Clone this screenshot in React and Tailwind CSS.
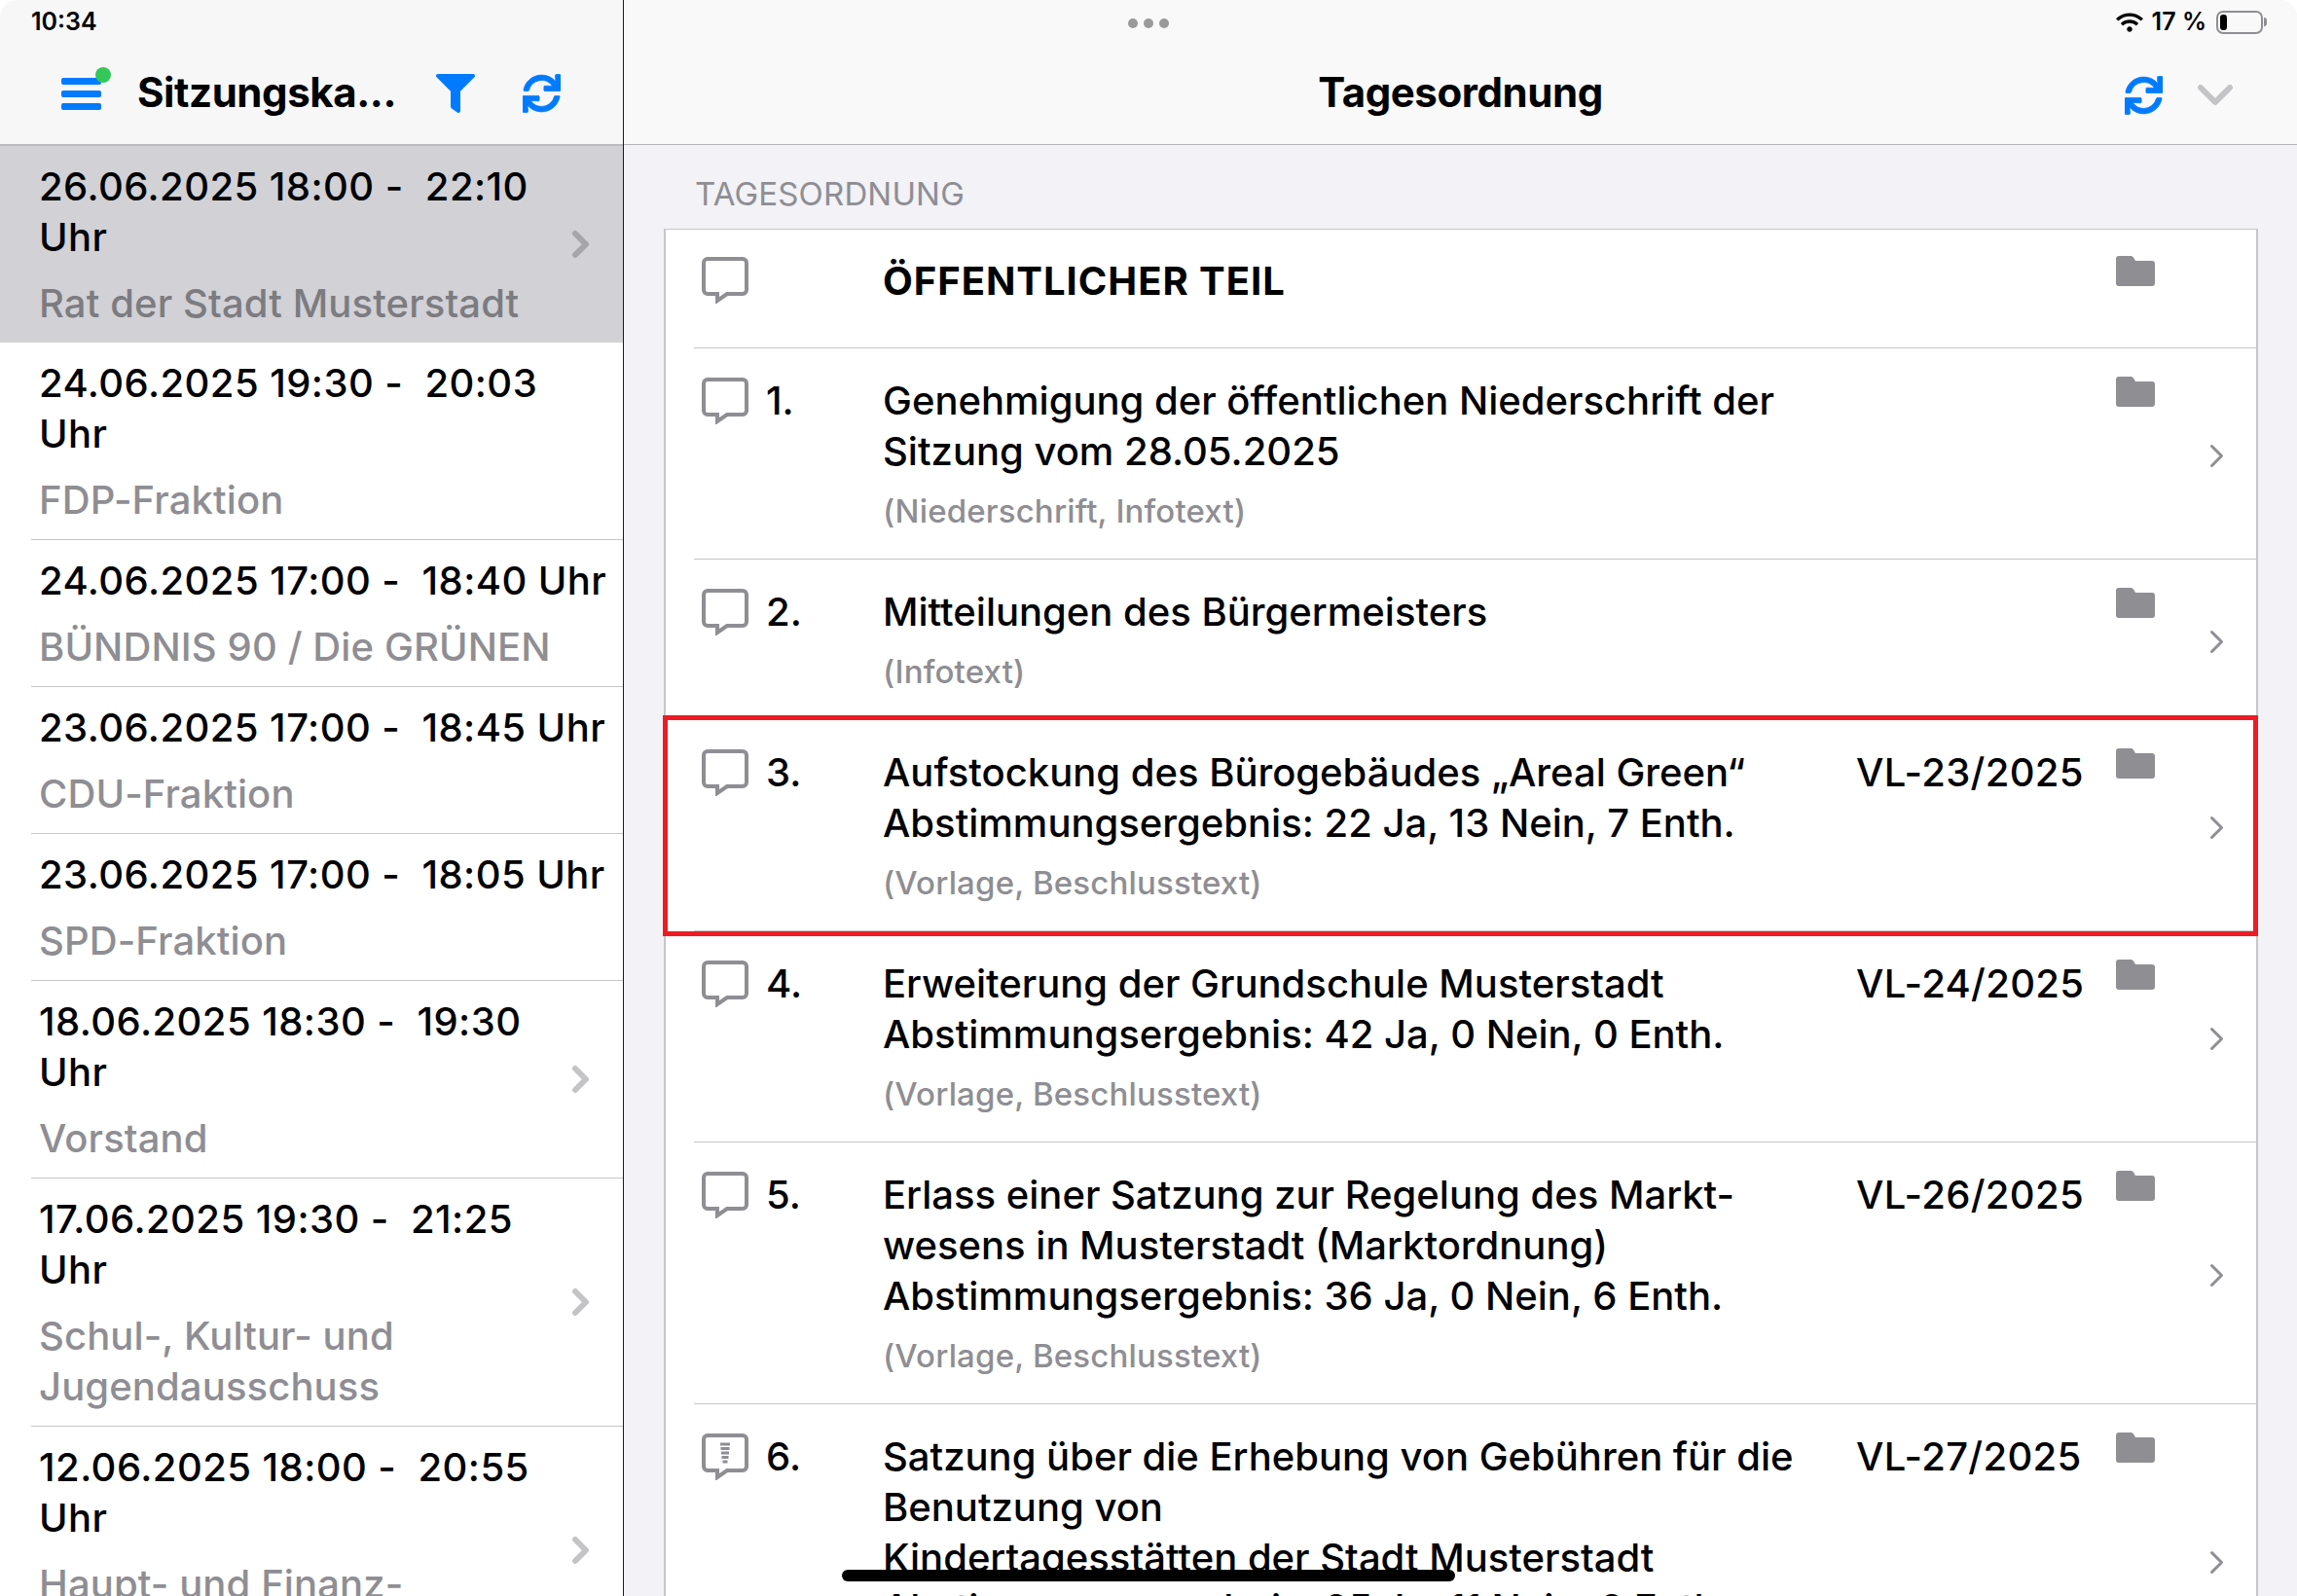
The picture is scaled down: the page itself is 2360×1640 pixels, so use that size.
import { FaFilter, FaSync, FaWifi } from 'react-icons/fa';

const meetings = [
    { time: '26.06.2025 18:00 -  22:10', uhrBreak: true, name: ['Rat der Stadt Musterstadt'], selected: true, chevron: true },
    { time: '24.06.2025 19:30 -  20:03', uhrBreak: true, name: ['FDP-Fraktion'] },
    { time: '24.06.2025 17:00 -  18:40 Uhr', name: ['BÜNDNIS 90 / Die GRÜNEN'] },
    { time: '23.06.2025 17:00 -  18:45 Uhr', name: ['CDU-Fraktion'] },
    { time: '23.06.2025 17:00 -  18:05 Uhr', name: ['SPD-Fraktion'] },
    { time: '18.06.2025 18:30 -  19:30', uhrBreak: true, name: ['Vorstand'], chevron: true },
    { time: '17.06.2025 19:30 -  21:25', uhrBreak: true, name: ['Schul-, Kultur- und', 'Jugendausschuss'], chevron: true },
    { time: '12.06.2025 18:00 -  20:55', uhrBreak: true, name: ['Haupt- und Finanz-', 'ausschuss'], chevron: true },
];

const items = [
    { lines: ['ÖFFENTLICHER TEIL'], bold: true },
    { nr: '1.', lines: ['Genehmigung der öffentlichen Niederschrift der', 'Sitzung vom 28.05.2025'], sub: '(Niederschrift, Infotext)' },
    { nr: '2.', lines: ['Mitteilungen des Bürgermeisters'], sub: '(Infotext)' },
    { nr: '3.', lines: ['Aufstockung des Bürogebäudes „Areal Green“', 'Abstimmungsergebnis: 22 Ja, 13 Nein, 7 Enth.'], vl: 'VL-23/2025', sub: '(Vorlage, Beschlusstext)', marked: true },
    { nr: '4.', lines: ['Erweiterung der Grundschule Musterstadt', 'Abstimmungsergebnis: 42 Ja, 0 Nein, 0 Enth.'], vl: 'VL-24/2025', sub: '(Vorlage, Beschlusstext)' },
    { nr: '5.', lines: ['Erlass einer Satzung zur Regelung des Markt-', 'wesens in Musterstadt (Marktordnung)', 'Abstimmungsergebnis: 36 Ja, 0 Nein, 6 Enth.'], vl: 'VL-26/2025', sub: '(Vorlage, Beschlusstext)' },
    { nr: '6.', lines: ['Satzung über die Erhebung von Gebühren für die', 'Benutzung von', 'Kindertagesstätten der Stadt Musterstadt', 'Abstimmungsergebnis: 25 Ja, 11 Nein, 6 Enth.'], vl: 'VL-27/2025', sub: '(Vorlage, Beschlusstext)', note: true },
];

const CommentIcon = ({ note }) => (
    <svg width="48" height="48" viewBox="0 0 48 48" className="shrink-0 block">
        <path d="M6 2h36a4 4 0 0 1 4 4v28a4 4 0 0 1-4 4H26l-10 7V38H6a4 4 0 0 1-4-4V6a4 4 0 0 1 4-4z" fill="none" stroke="#8e8e93" strokeWidth="4" strokeLinejoin="miter" />
        {note && <path d="M19 11h10M19.500 15.500h9M20 20h8M20.500 24.500h7M21.500 29h5" stroke="#8e8e93" strokeWidth="3" />}
    </svg>
);

const FolderIcon = () => (
    <svg width="40" height="31" viewBox="0 0 40 31" className="shrink-0 block">
        <path d="M3 0h12c1.500 0 2.300.6 3 1.600L20 5h17a3 3 0 0 1 3 3v20a3 3 0 0 1-3 3H3a3 3 0 0 1-3-3V3a3 3 0 0 1 3-3z" fill="#8e8e93" />
    </svg>
);

const ChevronRight = ({ className, w, h, sw }) => (
    <svg width={w} height={h} viewBox={`0 0 ${w} ${h}`} className={className}>
        <path d={`M${sw / 2 + 1} ${sw / 2 + 1}L${w - sw / 2 - 1} ${h / 2}L${sw / 2 + 1} ${h - sw / 2 - 1}`} fill="none" stroke="currentColor" strokeWidth={sw} strokeLinecap="round" strokeLinejoin="round" />
    </svg>
);

const MeetingRow = ({ m }) => (
    <div className={m.selected ? 'bg-[#d1d1d6]' : ''}>
        <div className={`flex items-center ml-[32px] pr-[34px] ${m.selected ? '' : 'border-b border-[#c6c6c8]'}`}>
            <div className="flex-1 pt-[16px] pb-[14px] pl-[9px]">
                <div className="-ml-[1px] text-[40px] leading-[52px] font-medium text-black whitespace-pre tracking-[0.011em]">{m.time}</div>
                {m.uhrBreak && <div className="-ml-[1px] text-[40px] leading-[52px] font-medium text-black tracking-[0.011em]">Uhr</div>}
                <div className={`-ml-[1px] mt-[16px] text-[40px] leading-[52px] font-medium tracking-[0.003em] ${m.selected ? 'text-[#7c7c80]' : 'text-[#8e8e93]'}`}>
                    {m.name.map(n => <div key={n} className="whitespace-nowrap">{n}</div>)}
                </div>
            </div>
            {m.chevron && <ChevronRight w={19} h={30} sw={6} className={`shrink-0 ${m.selected ? 'text-[#a5a5aa]' : 'text-[#c4c4c7]'}`} />}
        </div>
    </div>
);

const AgendaRow = ({ item }) => (
    <div className="relative">
        <div className="ml-[29px] pl-[8px] flex border-b border-[#c6c6c8]">
            <div className={`shrink-0 ${item.bold ? 'pt-[28px]' : 'pt-[30px]'}`}>
                <CommentIcon note={item.note} />
            </div>
            <div className="w-[120px] ml-[18px] shrink-0 pt-[28px] text-[40px] leading-[52px] font-medium text-black">{item.nr}</div>
            <div className={`w-[1000px] shrink-0 ${item.bold ? 'pt-[27px] pb-[42px]' : 'pt-[28px] pb-[29px]'}`}>
                {item.lines.map(l => (
                    <div key={l} className={`text-[40px] leading-[52px] text-black whitespace-nowrap ${item.bold ? 'font-bold tracking-[0.024em]' : 'font-medium'}`}>{l}</div>
                ))}
                {item.sub && <div className="mt-[15px] text-[33px] leading-[40px] font-medium text-[#8e8e93] whitespace-nowrap tracking-[0.005em]">{item.sub}</div>}
            </div>
            <div className="w-[267px] shrink-0 pt-[28px] text-[40px] leading-[52px] font-medium text-black whitespace-nowrap tracking-[0.008em]">{item.vl}</div>
            <div className={`shrink-0 ${item.bold ? 'pt-[27px]' : 'pt-[29px]'}`}>
                <FolderIcon />
            </div>
            {item.sub && <ChevronRight w={15} h={25} sw={3} className="self-center ml-[56px] mt-[5px] shrink-0 text-[#8e8e93]" />}
        </div>
        {item.marked && <div className="absolute -left-[3px] -right-[2px] -top-[5px] bottom-[-5px] border-[5px] border-[#ed1c24] pointer-events-none" />}
    </div>
);

const App = () => {
    return (
        <div className="relative w-[2360px] h-[1640px] overflow-hidden bg-white flex font-['Inter',sans-serif] rounded-t-[18px]">
            {/* Sidebar */}
            <div className="w-[641px] shrink-0 h-full border-r border-[#1c1c1e] bg-white">
                <div className="h-[150px] bg-[#f7f7f8] border-b-[2px] border-[#bcbcbe] flex flex-col">
                    <div className="h-[46px] pl-[32px] flex items-center text-[25px] font-semibold text-black">10:34</div>
                    <div className="flex items-center h-[100px]">
                        <div className="relative ml-[63px] w-[41px] flex flex-col gap-[6px]">
                            <div className="h-[7px] bg-[#007aff] rounded-[2px]" />
                            <div className="h-[7px] bg-[#007aff] rounded-[2px]" />
                            <div className="h-[7px] bg-[#007aff] rounded-[2px]" />
                            <div className="absolute -right-[10px] -top-[11px] w-[16px] h-[16px] rounded-full bg-[#34c759]" />
                        </div>
                        <div className="ml-[37px] w-[263px] mb-[3px] text-[42px] font-bold text-black whitespace-nowrap tracking-[-0.01em]">Sitzungska...</div>
                        <FaFilter className="ml-[44px] text-[#007aff] w-[40px] h-[40px]" />
                        <FaSync className="ml-[49px] text-[#007aff] w-[39px] h-[40px] stroke-current stroke-[10]" />
                    </div>
                </div>
                {meetings.map(m => <MeetingRow key={m.time} m={m} />)}
            </div>

            {/* Main */}
            <div className="flex-1 min-w-0 h-full bg-[#f2f2f7]">
                <div className="relative h-[149px] bg-[#f9f9fa] border-b border-[#b4b4b6]">
                    <div className="h-[46px] flex items-center justify-end">
                        <FaWifi className="w-[28px] h-[22px] text-black" />
                        <span className="ml-[9px] text-[25px] font-semibold text-black whitespace-nowrap">17 %</span>
                        <div className="ml-[10px] mr-[35px] relative w-[48px] h-[24px] rounded-[7px] border-[2px] border-[#8e8e93] p-[2px]">
                            <div className="w-[7px] h-full rounded-[3px] bg-black" />
                            <div className="absolute -right-[6px] top-[5px] w-[3px] h-[9px] rounded-r-[3px] bg-[#8e8e93]" />
                        </div>
                    </div>
                    <div className="absolute left-[518px] top-[19px] flex gap-[6px]">
                        <div className="w-[10px] h-[10px] rounded-full bg-[#9a9a9a]" />
                        <div className="w-[10px] h-[10px] rounded-full bg-[#9a9a9a]" />
                        <div className="w-[10px] h-[10px] rounded-full bg-[#9a9a9a]" />
                    </div>
                    <div className="relative flex items-center justify-center h-[100px]">
                        <span className="mb-[3px] text-[42px] font-bold text-black tracking-[-0.01em]">Tagesordnung</span>
                        <FaSync className="absolute left-[1542px] top-[32px] w-[39px] h-[40px] text-[#007aff] stroke-current stroke-[10]" />
                        <svg width="36" height="22" viewBox="0 0 36 22" className="absolute left-[1617px] top-[41px]">
                            <path d="M3 3l15 15L33 3" fill="none" stroke="#c4c4c7" strokeWidth="6" strokeLinecap="round" strokeLinejoin="round" />
                        </svg>
                    </div>
                </div>
                <div className="pl-[73px] pt-[30px] h-[86px] text-[33px] leading-[40px] text-[#8e8e93] whitespace-nowrap tracking-[0.005em]">TAGESORDNUNG</div>
                <div className="ml-[41px] w-[1638px] bg-white border-x-2 border-t border-[#c6c6c8]">
                    {items.map(item => <AgendaRow key={item.lines[0]} item={item} />)}
                </div>
            </div>

            {/* Home indicator */}
            <div className="absolute left-[865px] top-[1613px] w-[630px] h-[12px] rounded-full bg-black" />
        </div>
    );
};

export default App;
